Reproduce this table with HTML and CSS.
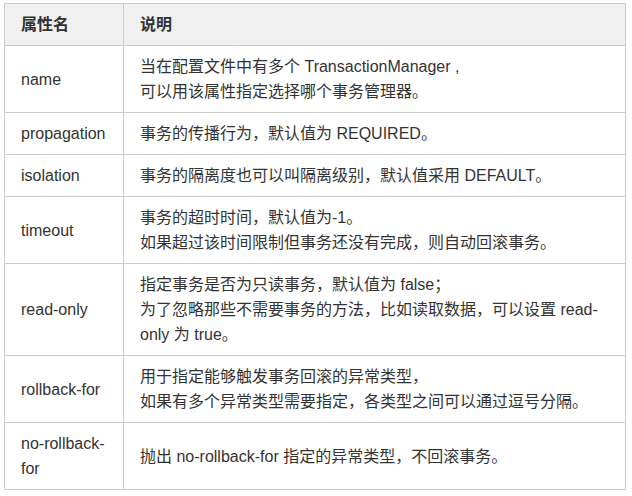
FILE: index.html
```html
<!DOCTYPE html>
<html lang="zh">
<head>
<meta charset="utf-8">
<link rel="stylesheet" href="styles.css">
</head>
<body>
<div class="wrap">
<table class="attr-table">
  <thead>
    <tr><th class="col-name">属性名</th><th>说明</th></tr>
  </thead>
  <tbody>
    <tr><td>name</td><td>当在配置文件中有多个 TransactionManager ,<br>可以用该属性指定选择哪个事务管理器。</td></tr>
    <tr><td>propagation</td><td>事务的传播行为，默认值为 REQUIRED。</td></tr>
    <tr><td>isolation</td><td>事务的隔离度也可以叫隔离级别，默认值采用 DEFAULT。</td></tr>
    <tr><td>timeout</td><td>事务的超时时间，默认值为-1。<br>如果超过该时间限制但事务还没有完成，则自动回滚事务。</td></tr>
    <tr><td>read-only</td><td>指定事务是否为只读事务，默认值为 false；<br>为了忽略那些不需要事务的方法，比如读取数据，可以设置 read-<br>only 为 true。</td></tr>
    <tr><td>rollback-for</td><td>用于指定能够触发事务回滚的异常类型，<br>如果有多个异常类型需要指定，各类型之间可以通过逗号分隔。</td></tr>
    <tr><td>no-rollback-<br>for</td><td>抛出 no-rollback-for 指定的异常类型，不回滚事务。</td></tr>
  </tbody>
</table>
</div>
</body>
</html>
```
FILE: styles.css
```css
html, body {
  margin: 0;
  padding: 0;
  background: #fff;
}
.wrap {
  padding: 3px 0 0 4px;
}
.attr-table {
  border-collapse: collapse;
  width: 622px;
  font-family: "Liberation Sans", "Noto Sans CJK SC", sans-serif;
  font-size: 16px;
  line-height: 25px;
  color: #333;
}
.attr-table th,
.attr-table td {
  border: 1px solid #ccc;
  padding: 8px 16px;
  text-align: left;
  vertical-align: middle;
  white-space: nowrap;
}
.attr-table th {
  background: #f0f0f0;
  font-weight: bold;
}
.attr-table .col-name {
  width: 86px;
}
```
